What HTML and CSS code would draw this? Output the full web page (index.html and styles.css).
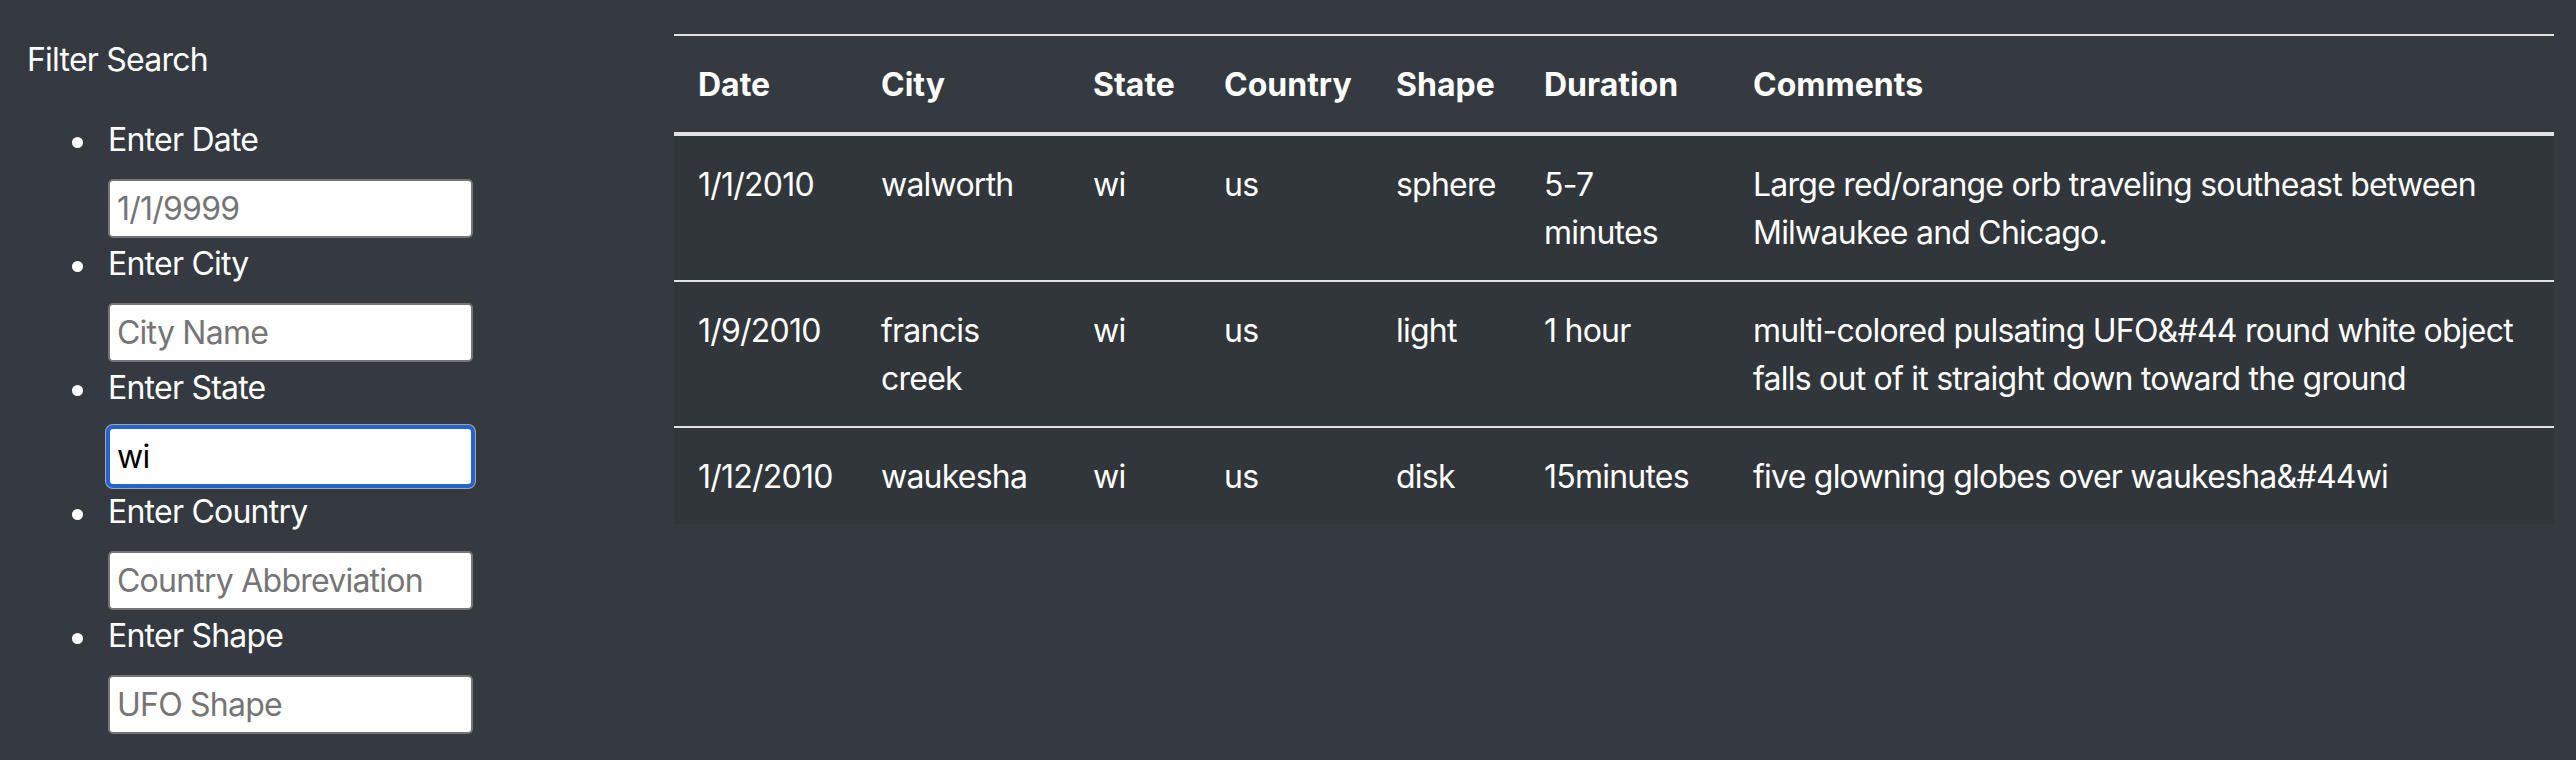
FILE: index.html
```html
<!DOCTYPE html>
<html lang="en">
<head>
<meta charset="utf-8">
<title>UFO Sightings</title>
<link rel="stylesheet" href="styles.css">
</head>
<body>
<div class="page">
  <aside class="filters">
    <p class="filters-title">Filter Search</p>
    <ul class="filter-list">
      <li class="filter-item">
        <label class="filter-label" for="datetime">Enter Date</label>
        <input class="filter-input" id="datetime" type="text" placeholder="1/1/9999">
      </li>
      <li class="filter-item">
        <label class="filter-label" for="city">Enter City</label>
        <input class="filter-input" id="city" type="text" placeholder="City Name">
      </li>
      <li class="filter-item">
        <label class="filter-label" for="state">Enter State</label>
        <input class="filter-input is-focused" id="state" type="text" value="wi" autofocus>
      </li>
      <li class="filter-item">
        <label class="filter-label" for="country">Enter Country</label>
        <input class="filter-input" id="country" type="text" placeholder="Country Abbreviation">
      </li>
      <li class="filter-item">
        <label class="filter-label" for="shape">Enter Shape</label>
        <input class="filter-input" id="shape" type="text" placeholder="UFO Shape">
      </li>
    </ul>
  </aside>
  <main class="results">
    <table class="ufo-table">
      <colgroup>
        <col class="col-date">
        <col class="col-city">
        <col class="col-state">
        <col class="col-country">
        <col class="col-shape">
        <col class="col-duration">
        <col class="col-comments">
      </colgroup>
      <thead>
        <tr>
          <th>Date</th>
          <th>City</th>
          <th>State</th>
          <th>Country</th>
          <th>Shape</th>
          <th>Duration</th>
          <th>Comments</th>
        </tr>
      </thead>
      <tbody>
        <tr>
          <td>1/1/2010</td>
          <td>walworth</td>
          <td>wi</td>
          <td>us</td>
          <td>sphere</td>
          <td>5-7 minutes</td>
          <td>Large red/orange orb traveling southeast between Milwaukee and Chicago.</td>
        </tr>
        <tr>
          <td>1/9/2010</td>
          <td>francis creek</td>
          <td>wi</td>
          <td>us</td>
          <td>light</td>
          <td>1 hour</td>
          <td>multi-colored pulsating UFO&amp;#44 round white object falls out of it straight down toward the ground</td>
        </tr>
        <tr>
          <td>1/12/2010</td>
          <td>waukesha</td>
          <td>wi</td>
          <td>us</td>
          <td>disk</td>
          <td>15minutes</td>
          <td>five glowning globes over waukesha&amp;#44wi</td>
        </tr>
      </tbody>
    </table>
  </main>
</div>
</body>
</html>
```

FILE: styles.css
```css
html, body {
  margin: 0;
  background: #343a40;
}

body {
  font-family: Inter, "Noto Sans", "Liberation Sans", sans-serif;
  font-size: 32px;
  line-height: 48px;
  letter-spacing: -0.024em;
  color: #ffffff;
}

.page {
  display: flex;
  align-items: flex-start;
  box-sizing: border-box;
  height: 760px;
  padding-top: 34px;
  overflow: hidden;
}

.filters {
  flex: none;
  width: 644px;
  box-sizing: border-box;
  padding-left: 27px;
}

.filters-title {
  margin: 0 0 30px;
  padding-top: 2px;
}

.filter-list {
  margin: 0;
  padding-left: 81px;
  list-style: none;
}

.filter-label {
  display: block;
  padding-top: 2px;
}

.filter-label::before {
  content: "";
  display: inline-block;
  width: 11px;
  height: 11px;
  margin-left: -36px;
  margin-right: 25px;
  border-radius: 50%;
  background: #ffffff;
  vertical-align: middle;
}

.filter-input {
  display: block;
  box-sizing: border-box;
  width: 365px;
  height: 59px;
  margin: 15px 0 0;
  padding: 0 7px;
  border: 2px solid #767676;
  border-radius: 5px;
  background: #ffffff;
  font-family: Inter, "Noto Sans", "Liberation Sans", sans-serif;
  font-size: 32px;
  letter-spacing: -0.024em;
  color: #000000;
  caret-color: #000000;
}

.filter-input::placeholder {
  color: #757575;
}

.filter-input:focus,
.filter-input.is-focused {
  outline: none;
  border-color: #2563d1;
  box-shadow: 0 0 0 2px #2563d1, 0 0 0 3px rgba(255, 255, 255, 0.55);
}

.results {
  flex: 1;
  min-width: 0;
  padding: 0 22px 0 30px;
}

.ufo-table {
  width: 1880px;
  table-layout: fixed;
  border-collapse: separate;
  border-spacing: 0;
}

.col-date { width: 183px; }
.col-city { width: 212px; }
.col-state { width: 131px; }
.col-country { width: 172px; }
.col-shape { width: 148px; }
.col-duration { width: 209px; }
.col-comments { width: 825px; }

.ufo-table th,
.ufo-table td {
  padding: 25px 24px 23px;
  text-align: left;
  vertical-align: top;
}

.ufo-table thead th {
  font-weight: 700;
  letter-spacing: 0;
  border-top: 2px solid #dee2e6;
  border-bottom: 4px solid #dee2e6;
}

.ufo-table tbody tr {
  background: #31363b;
}

.ufo-table tbody tr + tr td {
  border-top: 2px solid #dee2e6;
}
```
